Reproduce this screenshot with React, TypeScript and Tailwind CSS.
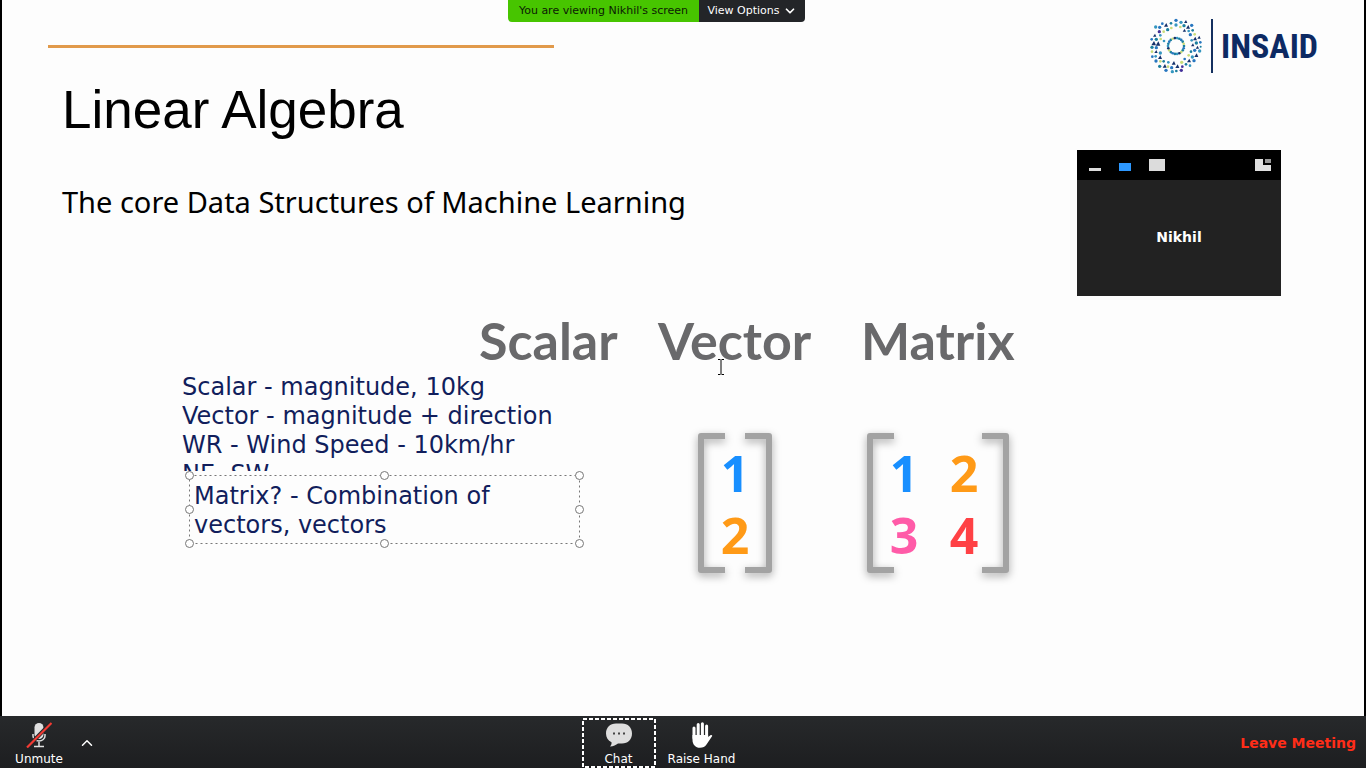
import React from "react";
import { ChevronDown, ChevronUp } from "lucide-react";

type Dot = [number, number, number, string];

const NAVY = "#14306b";
const TEAL = "#1b7f9f";
const BLUE = "#2776c0";
const SKY = "#3596c0";
const LIME = "#c9dc7a";
const VIOLET = "#43309a";

const OUTER_DOTS: Dot[] = [
  [107, 32, 5, BLUE], [122, 38, 5, SKY], [136, 36, 4, NAVY], [92, 41, 4, TEAL], [107, 46, 5, SKY],
  [77, 46, 5, NAVY], [66, 42, 4, BLUE], [58, 53, 5, BLUE], [46, 52, 5, SKY], [57, 66, 5, VIOLET],
  [70, 66, 4, LIME], [82, 60, 5, TEAL], [93, 55, 4, LIME], [120, 52, 4, LIME], [131, 48, 5, TEAL],
  [143, 52, 5, NAVY], [154, 47, 5, BLUE], [145, 64, 4, SKY], [132, 62, 4, NAVY], [157, 62, 4, TEAL],
  [150, 75, 5, BLUE], [163, 74, 4, LIME], [164, 87, 5, NAVY], [176, 83, 4, NAVY], [154, 92, 4, SKY],
  [168, 100, 5, TEAL], [180, 98, 4, BLUE], [157, 106, 4, NAVY], [171, 113, 4, NAVY], [181, 111, 3, TEAL],
  [178, 124, 5, SKY], [163, 122, 5, BLUE], [152, 126, 4, TEAL], [168, 137, 5, NAVY], [156, 142, 5, SKY],
  [145, 137, 4, LIME], [161, 153, 5, BLUE], [146, 153, 5, NAVY], [133, 148, 4, BLUE], [137, 164, 4, TEAL],
  [149, 168, 4, SKY], [124, 158, 5, LIME], [126, 171, 4, VIOLET], [123, 182, 5, VIOLET], [111, 170, 5, NAVY],
  [108, 184, 4, TEAL], [96, 186, 5, SKY], [94, 174, 5, BLUE], [100, 160, 5, NAVY], [83, 171, 4, LIME],
  [77, 182, 5, BLUE], [73, 169, 5, NAVY], [58, 170, 5, TEAL], [84, 158, 4, SKY], [70, 155, 4, TEAL],
  [60, 155, 4, LIME], [47, 154, 5, BLUE], [59, 143, 5, NAVY], [46, 140, 4, SKY], [36, 141, 4, BLUE],
  [60, 130, 5, SKY], [47, 126, 4, NAVY], [35, 126, 4, LIME], [35, 113, 5, TEAL], [48, 114, 5, BLUE],
  [40, 101, 6, NAVY], [53, 102, 6, NAVY], [34, 89, 4, BLUE], [48, 89, 5, TEAL], [61, 88, 4, LIME],
  [43, 77, 4, NAVY], [60, 77, 4, SKY], [71, 94, 4, SKY],
];

const INNER_DOTS: Dot[] = Array.from({ length: 22 }, (_, i) => {
  const a = (i / 22) * Math.PI * 2;
  const colors = [TEAL, BLUE, TEAL, LIME, NAVY, SKY];
  return [107 + 24 * Math.cos(a), 109 + 24 * Math.sin(a), 4, colors[i % 6]];
});

function Logo() {
  return (
    <div className="flex h-14 items-center">
      <svg className="h-14 w-[54px]" viewBox="26 25 162 168" aria-hidden="true">
        {OUTER_DOTS.map(([x, y, r, c], i) =>
          c === NAVY ? (
            <path key={i} d={`M${x - r - 1} ${y + r}L${x + 1} ${y - r - 1}L${x + r + 1} ${y + r}Z`} fill={c} />
          ) : (
            <circle key={i} cx={x} cy={y} r={r} fill={c} />
          ),
        )}
        {INNER_DOTS.map(([x, y, r, c], i) => (
          <circle key={i} cx={x} cy={y} r={r} fill={c} />
        ))}
      </svg>
      <div className="ml-2 h-[54px] w-[2px] bg-[#14305f]" />
      <span className="ml-2 w-24 whitespace-nowrap font-['Roboto_Condensed','Open_Sans_Condensed','Liberation_Sans_Narrow','Liberation_Sans',sans-serif] text-[34px] leading-[50px] font-bold text-[#0d2a63]">
        INSAID
      </span>
    </div>
  );
}

function Bracket({ side }: { side: "left" | "right" }) {
  return (
    <svg
      className="h-[140px] w-7 shrink-0 overflow-visible drop-shadow-[0_3px_4px_rgba(0,0,0,0.35)]"
      viewBox="0 0 28 140"
      fill="none"
      stroke="#a3a3a3"
      aria-hidden="true"
    >
      <path d={side === "left" ? "M27 3H3V137H27" : "M1 3H25V137H1"} strokeWidth="6" strokeLinejoin="round" />
    </svg>
  );
}

const DIGIT = "block text-center font-['Open_Sans','Noto_Sans',sans-serif] text-[50px] leading-[62px] font-bold";

function Handle({ place }: { place: string }) {
  return <span className={`absolute size-[9px] rounded-full border border-[#777] bg-white ${place}`} />;
}

function SelectedNote() {
  return (
    <div className="relative mt-1 ml-[7px] w-[391px] px-[5px] pt-[7px] pb-1">
      <svg className="absolute inset-0 size-full" aria-hidden="true">
        <rect x="0.5" y="0.5" width="390" height="68" fill="none" stroke="#777" strokeDasharray="2 3" />
      </svg>
      <p>
        Matrix? - Combination of
        <br />
        vectors, vectors
      </p>
      <Handle place="-top-1 -left-1" />
      <Handle place="-top-1 left-[191px]" />
      <Handle place="-top-1 -right-1" />
      <Handle place="top-[30px] -left-1" />
      <Handle place="top-[30px] -right-1" />
      <Handle place="-bottom-1 -left-1" />
      <Handle place="-bottom-1 left-[191px]" />
      <Handle place="-bottom-1 -right-1" />
    </div>
  );
}

function ShareBanner() {
  return (
    <div className="absolute top-0 left-[506px] flex h-[22px] overflow-hidden rounded-b-[4px] text-[11px] leading-[22px]">
      <div className="w-[191px] bg-[#47c500] text-center whitespace-nowrap text-[#0c1a05]">
        You are viewing Nikhil's screen
      </div>
      <button className="flex w-[106px] items-center justify-center gap-[3px] bg-[#232528] whitespace-nowrap text-white">
        <span className="leading-5">View Options</span>
        <ChevronDown className="size-[14px]" strokeWidth={3} aria-hidden="true" />
      </button>
    </div>
  );
}

function VideoPanel() {
  return (
    <section className="absolute top-[150px] right-[83px] w-[204px] bg-[#222222]" aria-label="Video">
      <div className="flex h-[30px] items-start bg-black pt-[9px] pr-[10px] pl-3">
        <button aria-label="Minimize" className="flex h-3 w-3 items-end">
          <span className="block h-[3px] w-3 bg-[#dcdcdc]" />
        </button>
        <button aria-label="Small view" className="ml-[18px] flex h-3 w-3 items-end">
          <span className="block h-2 w-3 bg-[#2d98ff]" />
        </button>
        <button aria-label="Large view" className="ml-[18px] h-3 w-4 bg-[#dcdcdc]" />
        <button aria-label="Gallery view" className="ml-auto h-3 w-4">
          <svg viewBox="0 0 16 12" className="h-3 w-4" aria-hidden="true">
            <path d="M0 0H8V6H16V12H0Z" fill="#e0e0e0" />
            <path d="M10 0H16V4H10Z" fill="#999" />
          </svg>
        </button>
      </div>
      <div className="flex h-[116px] items-center justify-center pb-[2px] text-[14px] font-bold text-white">Nikhil</div>
    </section>
  );
}

function MutedMic() {
  return (
    <svg viewBox="0 0 26 26" className="h-[26px] w-[26px]" fill="none" aria-hidden="true">
      <rect x="8.500" y="1" width="9" height="16" rx="4.500" fill="#e0e0e0" />
      <path d="M7 12v2a6 5 0 0 0 12 0v-2M13 20V24M8 24.500h10" stroke="#e0e0e0" strokeWidth="1.500" />
      <path d="M1 25.500L25 1" stroke="#232527" strokeWidth="4" />
      <path d="M1 25.500L25.500 1" stroke="#f33a33" strokeWidth="2.200" />
    </svg>
  );
}

function ChatBubble() {
  return (
    <svg viewBox="0 0 26 24" className="h-6 w-[26px]" aria-hidden="true">
      <path
        d="M10 0.500H16C22 0.500 26 4.500 26 10.500S22 20.500 16 20.500H12C10 22 7.500 23.300 4 23.500C5.200 22.300 5.800 21 5.500 19.300C2 17.600 0 14.600 0 10.500C0 4.500 4 0.500 10 0.500Z"
        fill="#dedede"
      />
      <path d="M7 9.500h2v2H7zM12 9.500h2v2h-2zM17 9.500h2v2h-2z" fill="#444" />
    </svg>
  );
}

function Hand() {
  return (
    <svg viewBox="0 0 22 26" className="h-[26px] w-[22px]" fill="none" stroke="#fff" strokeLinecap="round" aria-hidden="true">
      <path d="M3 6V16M7.200 2.500V14M11.400 1.800V14M15.600 4V15" strokeWidth="3" />
      <path
        d="M1.500 13H17.100V15L19.400 13.200C20.700 12.400 21.800 13.400 20.900 14.600L15.500 22.500C14 24.800 12 25.800 9 25.800C4.500 25.800 1.500 22.500 1.500 18Z"
        fill="#fff"
        stroke="none"
      />
    </svg>
  );
}

function Toolbar() {
  return (
    <footer className="flex h-[52px] shrink-0 items-stretch bg-linear-to-b from-[#27292b] to-[#1d1e20] text-[12px] leading-4 text-white">
      <div className="flex flex-1 items-stretch">
        <button className="flex w-[78px] flex-col items-center justify-end pb-px">
          <MutedMic />
          <span className="mt-[3px]">Unmute</span>
        </button>
        <button aria-label="Audio options" className="flex items-center pt-px">
          <ChevronUp className="size-[18px]" strokeWidth={2} />
        </button>
      </div>
      <div className="flex items-stretch pr-9">
        <button className="relative flex w-[74px] flex-col items-center justify-end pb-px">
          <svg className="absolute inset-0 size-full" aria-hidden="true">
            <rect x="1" y="3" width="72" height="48" fill="none" stroke="#fff" strokeWidth="2" strokeDasharray="4 2" />
          </svg>
          <ChatBubble />
          <span className="mt-1">Chat</span>
        </button>
        <button className="ml-[9px] flex w-[74px] flex-col items-center justify-end pb-px whitespace-nowrap">
          <Hand />
          <span className="mt-[3px]">Raise Hand</span>
        </button>
      </div>
      <div className="flex flex-1 items-center justify-end pt-[2px] pr-[10px]">
        <button className="text-[14px] font-bold text-[#ff2d18]">Leave Meeting</button>
      </div>
    </footer>
  );
}

export default function App() {
  return (
    <div className="flex min-h-screen flex-col bg-black font-['DejaVu_Sans',sans-serif]">
      <main className="relative mx-[2px] flex-1 bg-[#fdfdfd]">
        <header className="flex items-center justify-between pt-[18px] pr-[47px] pl-[46px]">
          <div className="h-[3px] w-[506px] bg-[#e19a4b]" />
          <Logo />
        </header>
        <h1 className="mt-1 pl-[60px] font-['Liberation_Sans',sans-serif] text-[53px] leading-[64px] text-black">
          Linear Algebra
        </h1>
        <p className="mt-10 pl-[60px] font-['Noto_Sans',sans-serif] text-[29px] leading-10 text-black">
          The core Data Structures of Machine Learning
        </p>
        <div className="mt-[88px] flex pl-[477px] font-['Lato',sans-serif] text-[52px] leading-[60px] font-bold text-[#69696b]">
          <h2 className="w-[179px]">Scalar</h2>
          <h2 className="w-[203px]">Vector</h2>
          <h2>Matrix</h2>
        </div>
        <div className="mt-[3px] flex items-start pl-[180px]">
          <div className="w-[516px] text-[24px] leading-[29px] text-[#111e5c]">
            <p className="h-[98px] overflow-hidden whitespace-nowrap">
              Scalar - magnitude, 10kg
              <br />
              Vector - magnitude + direction
              <br />
              WR - Wind Speed - 10km/hr
              <br />
              NE, SW
            </p>
            <SelectedNote />
          </div>
          <div className="mt-[60px] flex">
            <Bracket side="left" />
            <div className="w-[18px]">
              <div className="-mx-2 pt-[9px]">
                <span className={`${DIGIT} text-[#188fff]`}>1</span>
                <span className={`${DIGIT} text-[#ff9a17]`}>2</span>
              </div>
            </div>
            <Bracket side="right" />
          </div>
          <div className="mt-[60px] ml-[95px] flex">
            <Bracket side="left" />
            <div className="-mx-[21px] grid grid-cols-[60px_60px] content-start pt-[9px] pr-2">
              <span className={`${DIGIT} text-[#188fff]`}>1</span>
              <span className={`${DIGIT} text-[#ff9a17]`}>2</span>
              <span className={`${DIGIT} text-[#ff5ba8]`}>3</span>
              <span className={`${DIGIT} text-[#ff4145]`}>4</span>
            </div>
            <Bracket side="right" />
          </div>
        </div>
        <svg className="absolute top-[359px] left-[715px] h-4 w-2" viewBox="0 0 8 16" fill="none" stroke="#000" aria-hidden="true">
          <path d="M1 0.500H3.500M4.500 0.500H7M4 1V15M1 15.500H3.500M4.500 15.500H7" />
        </svg>
        <ShareBanner />
        <VideoPanel />
      </main>
      <Toolbar />
    </div>
  );
}
